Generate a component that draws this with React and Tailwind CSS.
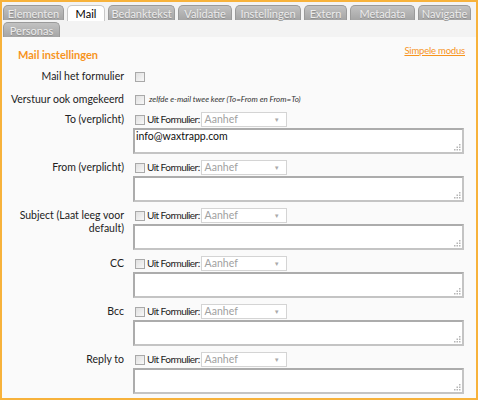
import React from 'react';

const TABS = [
  { name: 'Elementen', w: 'w-[61px]' },
  { name: 'Mail', w: 'w-[38px]', active: true },
  { name: 'Bedanktekst', w: 'w-[67px]' },
  { name: 'Validatie', w: 'w-[54px]' },
  { name: 'Instellingen', w: 'w-[66px]' },
  { name: 'Extern', w: 'w-[43px]' },
  { name: 'Metadata', w: 'w-[65px]' },
  { name: 'Navigatie', w: 'w-[53px]' },
  { name: 'Personas', w: 'w-[57px]' },
];

const FIELDS = [
  { label: 'To (verplicht)', value: 'info@waxtrapp.com' },
  { label: 'From (verplicht)' },
  { label: 'Subject (Laat leeg voor default)' },
  { label: 'CC' },
  { label: 'Bcc' },
  { label: 'Reply to' },
];

function Checkbox() {
  return (
    <span className="inline-block h-[10px] w-[10px] shrink-0 border border-[#a9a9a9] bg-gradient-to-br from-[#e0e0e0] to-[#f8f8f8]" />
  );
}

function Tab({ name, w, active }) {
  if (active) {
    return (
      <div className={`${w} flex h-[16px] items-center justify-center rounded-t-[5px] border border-b-0 border-[#c8c8c8] bg-white text-[11px] text-black`}>
        {name}
      </div>
    );
  }
  return (
    <div className={`${w} flex h-[15px] items-center justify-center rounded-t-[5px] border border-b-0 border-[#9a9a9a] bg-gradient-to-b from-[#c2c2c2] to-[#a5a5a5] text-[11px] text-[#ececec] [text-shadow:0_1px_0_#8f8f8f]`}>
      {name}
    </div>
  );
}

// dotted resize grip drawn over the textarea corner
function Grip() {
  return (
    <svg className="pointer-events-none absolute bottom-[3px] right-[3px]" width="7" height="7" viewBox="0 0 7 7">
      <g fill="#b5b5b5">
        <rect x="5" y="0" width="1.5" height="1.5" />
        <rect x="2.5" y="2.5" width="1.5" height="1.5" />
        <rect x="5" y="2.5" width="1.5" height="1.5" />
        <rect x="0" y="5" width="1.5" height="1.5" />
        <rect x="2.5" y="5" width="1.5" height="1.5" />
        <rect x="5" y="5" width="1.5" height="1.5" />
      </g>
    </svg>
  );
}

function FieldRow({ label, value }) {
  return (
    <div className="flex">
      <div className="w-[122px] pl-[4px] pt-[1px] text-right leading-[13px] text-[#222]">{label}</div>
      <div className="ml-[9px] w-[331px]">
        <div className="flex h-[15px] items-center">
          <span className="ml-[2px] flex"><Checkbox /></span>
          <span className="ml-[2px] text-[10px] tracking-[-0.55px] text-[#222]">Uit Formulier:</span>
          <div className="ml-[1px] flex h-[15px] w-[86px] items-center justify-between border border-[#d4d4d4] bg-white pl-[3px] pr-[6px] text-[#a0a0a0]">
            <span>Aanhef</span>
            <span className="text-[6px] text-[#aaa]">▼</span>
          </div>
        </div>
        <div className="relative mt-[1px]">
          <textarea
            readOnly
            defaultValue={value || ''}
            className="block h-[26px] w-[331px] resize-none border-2 border-t-[#acacac] border-l-[#acacac] border-r-[#c4c4c4] border-b-[#c4c4c4] bg-white px-[1px] py-0 text-[10.5px] leading-[13px] text-[#111] outline-none"
          />
          <Grip />
        </div>
      </div>
    </div>
  );
}

export default function App() {
  return (
    <div className="h-[400px] w-[478px] overflow-hidden border-2 border-[#f7b23b] bg-[#fafafa] text-[10.5px] leading-[13px] [font-family:Lato,'Liberation_Sans',sans-serif]">
      {/* Tab strip */}
      <div className="flex flex-wrap gap-x-[3px] gap-y-[1px] bg-[#f3f3f3] pl-[1px] pt-[3px]">
        {TABS.map(t => (
          <Tab key={t.name} {...t} />
        ))}
      </div>

      <div className="px-[16px] pt-[11px]">
        <div className="flex items-start justify-between">
          <h2 className="text-[11px] font-bold text-[#f7941d]">Mail instellingen</h2>
          <a href="#" className="mr-[-5px] mt-[-4px] text-[9.5px] tracking-[-0.2px] text-[#f7941d] underline">Simpele modus</a>
        </div>
      </div>

      <div className="mt-[9px] flex flex-col">
        <div className="flex items-center">
          <div className="w-[122px] text-right text-[#222]">Mail het formulier</div>
          <span className="ml-[11px] flex"><Checkbox /></span>
        </div>
        <div className="mt-[10px] flex items-center">
          <div className="w-[122px] text-right text-[#222]">Verstuur ook omgekeerd</div>
          <span className="ml-[11px] flex"><Checkbox /></span>
          <span className="ml-[4px] text-[8px] italic text-[#333]">zelfde e-mail twee keer (To=From en From=To)</span>
        </div>
        <div className="mt-[6px] flex flex-col gap-[6px]">
          {FIELDS.map(f => (
            <FieldRow key={f.label} {...f} />
          ))}
        </div>
      </div>
    </div>
  );
}
